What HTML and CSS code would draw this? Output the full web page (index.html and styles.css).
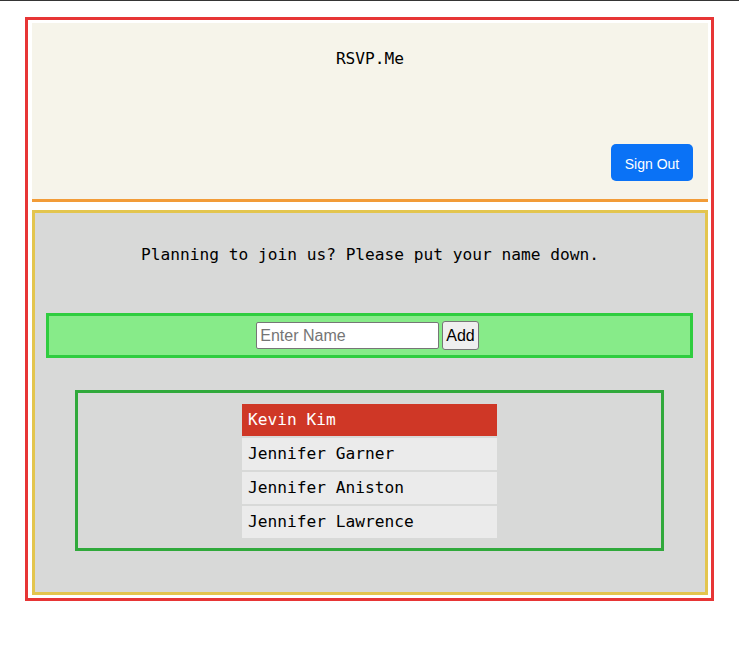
FILE: index.html
```html
<!DOCTYPE html>
<html>
<head>
<meta charset="utf-8">
<title>RSVP.Me</title>
<link rel="stylesheet" href="styles.css">
</head>
<body>
<div class="app">
  <header class="header">
    <div class="title">RSVP.Me</div>
    <div class="header-actions">
      <button class="signout">Sign Out</button>
    </div>
  </header>
  <main class="main">
    <p class="prompt">Planning to join us? Please put your name down.</p>
    <div class="form-row">
      <input class="name-input" type="text" placeholder="Enter Name">
      <button class="add-btn">Add</button>
    </div>
    <div class="list-box">
      <ul class="guest-list">
        <li class="guest active">Kevin Kim</li>
        <li class="guest">Jennifer Garner</li>
        <li class="guest">Jennifer Aniston</li>
        <li class="guest">Jennifer Lawrence</li>
      </ul>
    </div>
  </main>
</div>
</body>
</html>
```

FILE: styles.css
```css
html, body {
  margin: 0;
  padding: 0;
  background: #ffffff;
}
body {
  border-top: 1px solid #353535;
  font-family: "DejaVu Sans Mono", monospace;
  font-size: 16.2px;
  color: #000;
}
.app {
  margin: 16px 25px 0;
  border: 3px solid #e73535;
  padding: 3px 3px 3px 4px;
}
.header {
  background: #f6f4ea;
  border-bottom: 3px solid #f29c38;
  height: 176px;
  display: flex;
  flex-direction: column;
  box-sizing: content-box;
}
.title {
  text-align: center;
  padding-top: 26px;
  line-height: 19px;
}
.header-actions {
  margin-top: auto;
  display: flex;
  justify-content: flex-end;
  padding: 0 15px 18px 0;
}
.signout {
  font-family: "Liberation Sans", Arial, sans-serif;
  font-size: 14px;
  color: #fff;
  background: #0a72f6;
  border: none;
  border-radius: 5px;
  width: 82px;
  height: 37px;
  padding: 2px 0 0;
}
.main {
  margin-top: 8px;
  border: 3px solid #e3c54e;
  background: #d8d9d8;
  padding: 32px 0 41px;
}
.prompt {
  margin: 0;
  text-align: center;
  line-height: 19px;
}
.form-row {
  margin: 49px 12px 0 11px;
  border: 3px solid #2fcd3f;
  background: #87eb89;
  height: 39px;
  display: flex;
  justify-content: center;
  align-items: center;
  gap: 3px;
}
.name-input {
  box-sizing: border-box;
  width: 183px;
  height: 27px;
  border: 1px solid #767676;
  border-radius: 2px;
  padding: 1px 3px;
  font-family: "Liberation Sans", Arial, sans-serif;
  font-size: 16px;
  background: #fff;
  margin: 0;
}
.name-input::placeholder {
  color: #757575;
}
.add-btn {
  box-sizing: border-box;
  height: 29px;
  padding: 0 3px;
  margin: 0 4px 0 0;
  font-family: "Liberation Sans", Arial, sans-serif;
  font-size: 16px;
  color: #000;
  background: #efefef;
  border: 1px solid #767676;
  border-radius: 3px;
}
.list-box {
  margin: 32px 41px 0 40px;
  border: 3px solid #30a93b;
  padding: 11px 0 10px;
  display: flex;
  justify-content: center;
}
.guest-list {
  list-style: none;
  margin: 0;
  padding: 0;
  width: 255px;
  display: flex;
  flex-direction: column;
  gap: 2px;
}
.guest {
  box-sizing: border-box;
  height: 32px;
  display: flex;
  align-items: center;
  padding: 0 0 2px 6px;
  background: #ebebeb;
  line-height: 19px;
}
.guest.active {
  background: #cf3726;
  color: #fff;
}
```
